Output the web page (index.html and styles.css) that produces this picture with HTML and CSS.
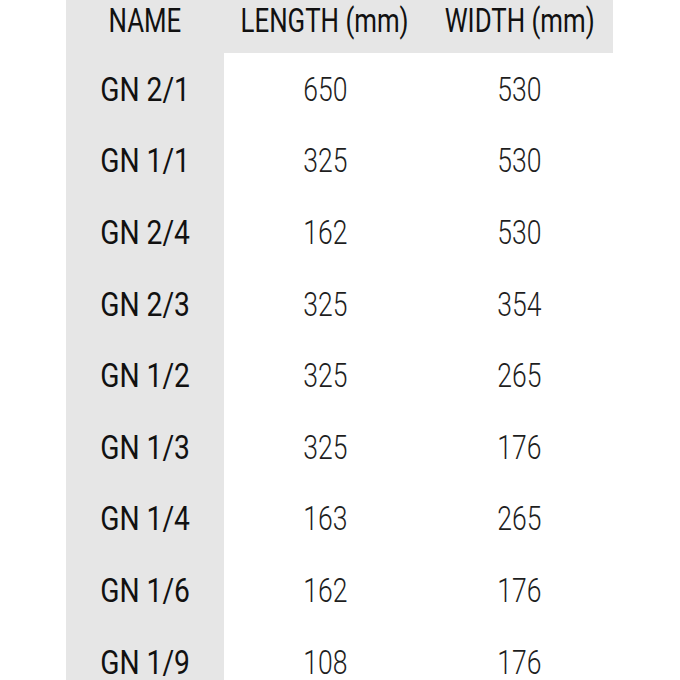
FILE: index.html
```html
<!DOCTYPE html>
<html>
<head>
<meta charset="utf-8">
<link rel="stylesheet" href="styles.css">
</head>
<body>
<div class="table">
  <div class="cell head"><span>NAME</span></div>
  <div class="cell head"><span>LENGTH (mm)</span></div>
  <div class="cell head"><span>WIDTH (mm)</span></div>

  <div class="cell name"><span>GN 2/1</span></div><div class="cell num"><span>650</span></div><div class="cell num"><span>530</span></div>
  <div class="cell name"><span>GN 1/1</span></div><div class="cell num"><span>325</span></div><div class="cell num"><span>530</span></div>
  <div class="cell name"><span>GN 2/4</span></div><div class="cell num"><span>162</span></div><div class="cell num"><span>530</span></div>
  <div class="cell name"><span>GN 2/3</span></div><div class="cell num"><span>325</span></div><div class="cell num"><span>354</span></div>
  <div class="cell name"><span>GN 1/2</span></div><div class="cell num"><span>325</span></div><div class="cell num"><span>265</span></div>
  <div class="cell name"><span>GN 1/3</span></div><div class="cell num"><span>325</span></div><div class="cell num"><span>176</span></div>
  <div class="cell name"><span>GN 1/4</span></div><div class="cell num"><span>163</span></div><div class="cell num"><span>265</span></div>
  <div class="cell name"><span>GN 1/6</span></div><div class="cell num"><span>162</span></div><div class="cell num"><span>176</span></div>
  <div class="cell name"><span>GN 1/9</span></div><div class="cell num"><span>108</span></div><div class="cell num"><span>176</span></div>
</div>
</body>
</html>
```
FILE: styles.css
```css
html, body {
  margin: 0;
  padding: 0;
  background: #ffffff;
  overflow: hidden;
}
.table {
  display: grid;
  grid-template-columns: 158px 202px 187px;
  grid-template-rows: 53px repeat(9, 71.6px);
  margin-left: 66px;
  font-family: Roboto, "Liberation Sans", sans-serif;
  font-size: 34px;
}
.cell {
  display: flex;
  align-items: center;
  justify-content: center;
  white-space: nowrap;
}
.cell span {
  display: inline-block;
}
.head {
  background: #e6e6e6;
  color: #111111;
  padding-bottom: 13px;
}
.head span {
  transform: scaleX(0.76);
}
.name {
  background: #e6e6e6;
  color: #111111;
}
.name span {
  transform: scaleX(0.83);
}
.num {
  color: #1e1e1e;
  font-weight: 300;
}
.num span {
  transform: scaleX(0.78);
}
```
